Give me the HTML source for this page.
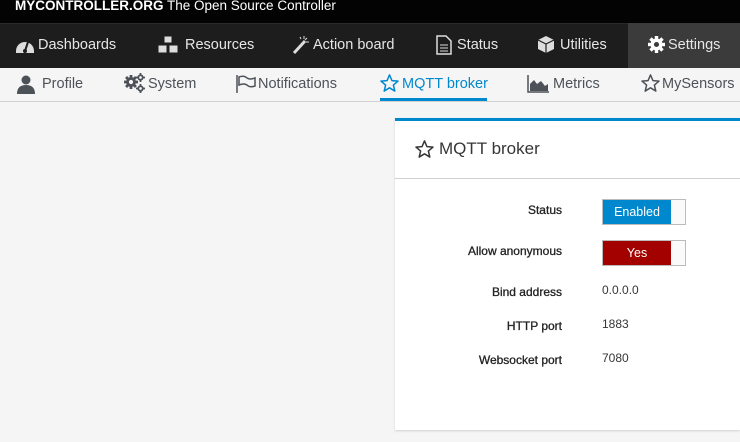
<!DOCTYPE html>
<html><head><meta charset="utf-8"><style>
*{margin:0;padding:0;box-sizing:border-box}
body{width:740px;height:442px;overflow:hidden;background:#f5f5f5;font-family:"Liberation Sans",sans-serif;position:relative}
.a{position:absolute;white-space:nowrap}
#top{left:0;top:0;width:740px;height:23px;background:#030303}
#nav{left:0;top:23px;width:740px;height:45px;background:#1d1d1d;border-top:1px solid #2a2a2a}
#act{left:628px;top:23px;width:112px;height:45px;background:#3b3b3b}
.n{color:#e6e6e6;font-size:14.5px;top:37px}
.s{color:#4d5258;font-size:14.5px;top:76px}
#sub{left:0;top:68px;width:740px;height:34px;background:#f5f5f5;border-bottom:1px solid #d1d1d1}
#panel{left:395px;top:118px;width:345px;height:312px;background:#fff;border-top:3px solid #0088ce;box-shadow:0 1px 2px rgba(0,0,0,.15)}
.l{font-size:12px;color:#222;right:178px;-webkit-text-stroke:0.3px #222}
.v{font-size:12px;color:#363636;left:602px}
.tg{left:602px;width:84px;height:26px;border:1px solid #bbb;background:#fafafa}
.tg span{position:absolute;left:0;top:0;width:68px;height:24px;color:#fff;font-size:12.5px;text-align:center;line-height:24px}
</style></head><body>
<div class="a" id="top"></div>
<div class="a" style="left:15px;top:-2px;color:#fff;font-size:13.5px"><b>MYCONTROLLER.ORG</b> The Open Source Controller</div>
<div class="a" id="nav"></div>
<div class="a" id="act"></div>
<svg class="a" style="left:15px;top:36px" width="20" height="18" viewBox="0 0 20 18"><path d="M1 15A9 9 0 0 1 19 15L19 17L1 17Z" fill="#ddd"/><path d="M10 15L13 6" stroke="#1d1d1d" stroke-width="2"/><circle cx="10" cy="15" r="2" fill="#1d1d1d"/></svg>
<div class="a n" style="left:38px">Dashboards</div>
<svg class="a" style="left:157px;top:35px" width="22" height="19" viewBox="0 0 22 19"><path d="M7 1h8v7H7zM1 10h9v8H1zM12 10h9v8h-9z" fill="#ddd" stroke="#1d1d1d"/></svg>
<div class="a n" style="left:185px">Resources</div>
<svg class="a" style="left:292px;top:35px" width="18" height="19" viewBox="0 0 18 19"><path d="M2 18L13 6" stroke="#ddd" stroke-width="3"/><path d="M12 1v3M15 3l-2 2M17 7h-3M8 2l1 2" stroke="#ddd"/></svg>
<div class="a n" style="left:313px">Action board</div>
<svg class="a" style="left:436px;top:35px" width="16" height="20" viewBox="0 0 16 20"><path d="M1 1h9l5 5v13H1z" fill="none" stroke="#ddd" stroke-width="1.5"/><path d="M4 10h8M4 13h8M4 16h8" stroke="#ddd"/></svg>
<div class="a n" style="left:457px">Status</div>
<svg class="a" style="left:537px;top:35px" width="18" height="19" viewBox="0 0 18 19"><path d="M9 1L17 5V14L9 18L1 14V5Z" fill="#ddd"/><path d="M1 5L9 9L17 5M9 9V18" stroke="#1d1d1d" stroke-width="1.2" fill="none"/></svg>
<div class="a n" style="left:560px">Utilities</div>
<svg class="a" style="left:648px;top:36px" width="17" height="17" viewBox="0 0 20 20"><g fill="#fff"><circle cx="10" cy="10" r="7"/><rect x="8" y="0" width="4" height="20"/><rect x="0" y="8" width="20" height="4"/><rect x="8" y="0" width="4" height="20" transform="rotate(45 10 10)"/><rect x="8" y="0" width="4" height="20" transform="rotate(-45 10 10)"/></g><circle cx="10" cy="10" r="3" fill="#3b3b3b"/></svg>
<div class="a n" style="left:668px">Settings</div>
<div class="a" id="sub"></div>
<svg class="a" style="left:16px;top:75px" width="20" height="19" viewBox="0 0 20 19"><circle cx="10" cy="5" r="4.5" fill="#4d5258"/><path d="M1 19Q1 10 10 10Q19 10 19 19Z" fill="#4d5258"/></svg>
<div class="a s" style="left:42px">Profile</div>
<svg class="a" style="left:124px;top:75px" width="14" height="14" viewBox="0 0 20 20"><g fill="#4d5258"><circle cx="10" cy="10" r="7"/><rect x="8" y="0" width="4" height="20"/><rect x="0" y="8" width="20" height="4"/><rect x="8" y="0" width="4" height="20" transform="rotate(45 10 10)"/><rect x="8" y="0" width="4" height="20" transform="rotate(-45 10 10)"/></g><circle cx="10" cy="10" r="3" fill="#f5f5f5"/></svg>
<svg class="a" style="left:136px;top:73px" width="9" height="9" viewBox="0 0 20 20"><g fill="#4d5258"><circle cx="10" cy="10" r="7"/><rect x="8" y="0" width="4" height="20"/><rect x="0" y="8" width="20" height="4"/></g><circle cx="10" cy="10" r="3" fill="#f5f5f5"/></svg>
<svg class="a" style="left:136px;top:84px" width="9" height="9" viewBox="0 0 20 20"><g fill="#4d5258"><circle cx="10" cy="10" r="7"/><rect x="8" y="0" width="4" height="20"/><rect x="0" y="8" width="20" height="4"/></g><circle cx="10" cy="10" r="3" fill="#f5f5f5"/></svg>
<div class="a s" style="left:148px">System</div>
<svg class="a" style="left:236px;top:75px" width="20" height="18" viewBox="0 0 20 18"><path d="M1 0V18" stroke="#4d5258" stroke-width="1.5"/><path d="M3 2Q8 0 11 3Q14 5 19 3V11Q14 13 11 10Q8 8 3 10Z" fill="none" stroke="#4d5258" stroke-width="1.5"/></svg>
<div class="a s" style="left:258px">Notifications</div>
<svg class="a" style="left:380px;top:74px" width="19" height="18" viewBox="0 0 20 19"><path d="M10 1L12.6 7 19 7.5 14.1 11.7 15.6 18 10 14.6 4.4 18 5.9 11.7 1 7.5 7.4 7Z" fill="none" stroke="#0088ce" stroke-width="1.6" stroke-linejoin="round"/></svg>
<div class="a s" style="left:402px;color:#0088ce">MQTT broker</div>
<div class="a" style="left:380px;top:98px;width:107px;height:3px;background:#0088ce"></div>
<svg class="a" style="left:527px;top:75px" width="22" height="18" viewBox="0 0 22 18"><path d="M1 0V17H22" stroke="#4d5258" stroke-width="1.5" fill="none"/><path d="M3 15L3 9L7 5L10 9L14 6L18 11L21 9V16H3Z" fill="#4d5258"/></svg>
<div class="a s" style="left:553px">Metrics</div>
<svg class="a" style="left:641px;top:74px" width="19" height="18" viewBox="0 0 20 19"><path d="M10 1L12.6 7 19 7.5 14.1 11.7 15.6 18 10 14.6 4.4 18 5.9 11.7 1 7.5 7.4 7Z" fill="none" stroke="#4d5258" stroke-width="1.6" stroke-linejoin="round"/></svg>
<div class="a s" style="left:662px">MySensors</div>
<div class="a" id="panel"></div>
<div class="a" style="left:395px;top:178px;width:345px;height:1px;background:#d1d1d1"></div>
<svg class="a" style="left:415px;top:140px" width="19" height="18" viewBox="0 0 20 19"><path d="M10 1L12.6 7 19 7.5 14.1 11.7 15.6 18 10 14.6 4.4 18 5.9 11.7 1 7.5 7.4 7Z" fill="none" stroke="#363636" stroke-width="1.6" stroke-linejoin="round"/></svg>
<div class="a" style="left:439px;top:139px;color:#363636;font-size:17px">MQTT broker</div>
<div class="a l" style="top:203px">Status</div>
<div class="a tg" style="top:199px"><span style="background:#0088ce">Enabled</span></div>
<div class="a l" style="top:244px">Allow anonymous</div>
<div class="a tg" style="top:240px"><span style="background:#a30000">Yes</span></div>
<div class="a l" style="top:285px">Bind address</div><div class="a v" style="top:283px">0.0.0.0</div>
<div class="a l" style="top:319px">HTTP port</div><div class="a v" style="top:317px">1883</div>
<div class="a l" style="top:353px">Websocket port</div><div class="a v" style="top:351px">7080</div>
</body></html>
